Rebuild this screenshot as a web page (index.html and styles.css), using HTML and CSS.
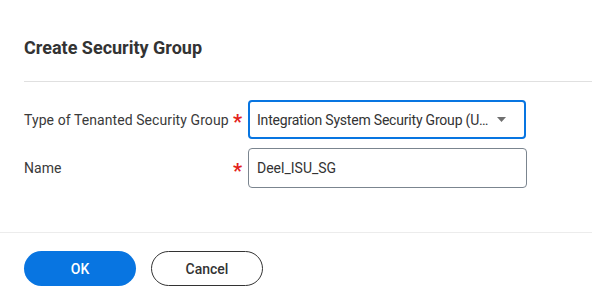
FILE: index.html
```html
<!DOCTYPE html>
<html>
<head>
<meta charset="utf-8">
<link rel="stylesheet" href="styles.css">
</head>
<body>
<div class="dialog">
  <h1 class="title">Create Security Group</h1>
  <div class="divider-top"></div>
  <div class="form">
    <div class="row">
      <label class="label">Type of Tenanted Security Group</label>
      <span class="req">*</span>
      <div class="field select">
        <span class="value">Integration System Security Group (Unconstrained)</span>
        <svg class="caret" width="9" height="5" viewBox="0 0 9 5"><path d="M0 0h9L4.5 5z" fill="#6f6f6f"/></svg>
      </div>
    </div>
    <div class="row">
      <label class="label">Name</label>
      <span class="req">*</span>
      <div class="field input">
        <span class="value">Deel_ISU_SG</span>
      </div>
    </div>
  </div>
  <div class="divider-bottom"></div>
  <div class="actions">
    <button class="btn primary">OK</button>
    <button class="btn secondary">Cancel</button>
  </div>
</div>
</body>
</html>
```
FILE: styles.css
```css
html, body {
  margin: 0;
  padding: 0;
  background: #fff;
}
body {
  font-family: Roboto, "Liberation Sans", sans-serif;
  color: #333;
  width: 592px;
  height: 296px;
  overflow: hidden;
}
.dialog {
  display: flex;
  flex-direction: column;
}
.title {
  margin: 0;
  padding: 36px 24px 0 24px;
  font-size: 18px;
  font-weight: 700;
  line-height: 24px;
  color: #333;
}
.divider-top {
  height: 1px;
  background: #e0e0e0;
  margin: 21px 0 0 24px;
}
.form {
  display: flex;
  flex-direction: column;
  gap: 9px;
  padding: 18px 0 0 24px;
}
.row {
  display: flex;
  align-items: center;
}
.label {
  width: 209px;
  font-size: 14px;
  color: #3a3a3a;
  font-weight: 400;
  letter-spacing: 0.08px;
}
.req {
  width: 15px;
  color: #e3221b;
  font-size: 20px;
  font-weight: 700;
  line-height: 14px;
  padding-top: 5px;
}
.field {
  box-sizing: border-box;
  height: 40px;
  border-radius: 4px;
  display: flex;
  align-items: center;
  font-size: 14px;
  color: #333;
}
.select {
  width: 278px;
  border: 2px solid #0875e1;
  padding: 0 18px 0 7px;
  height: 39px;
}
.input {
  width: 279px;
  border: 1px solid #7b858f;
  padding: 0 8px;
}
.select .value {
  flex: 1;
  min-width: 0;
  white-space: nowrap;
  overflow: hidden;
  text-overflow: ellipsis;
  letter-spacing: -0.2px;
}
.caret {
  margin-left: 5px;
  flex: none;
}
.divider-bottom {
  height: 1px;
  background: #ececec;
  margin-top: 44px;
}
.actions {
  display: flex;
  gap: 15px;
  padding: 18px 24px 0 24px;
}
.btn {
  box-sizing: border-box;
  width: 112px;
  height: 35px;
  border-radius: 18px;
  font-family: Roboto, "Liberation Sans", sans-serif;
  font-size: 14px;
  font-weight: 500;
  cursor: pointer;
}
.primary {
  background: #0875e1;
  color: #fff;
  border: none;
}
.secondary {
  background: #fff;
  color: #333;
  border: 1px solid #333;
}
```
